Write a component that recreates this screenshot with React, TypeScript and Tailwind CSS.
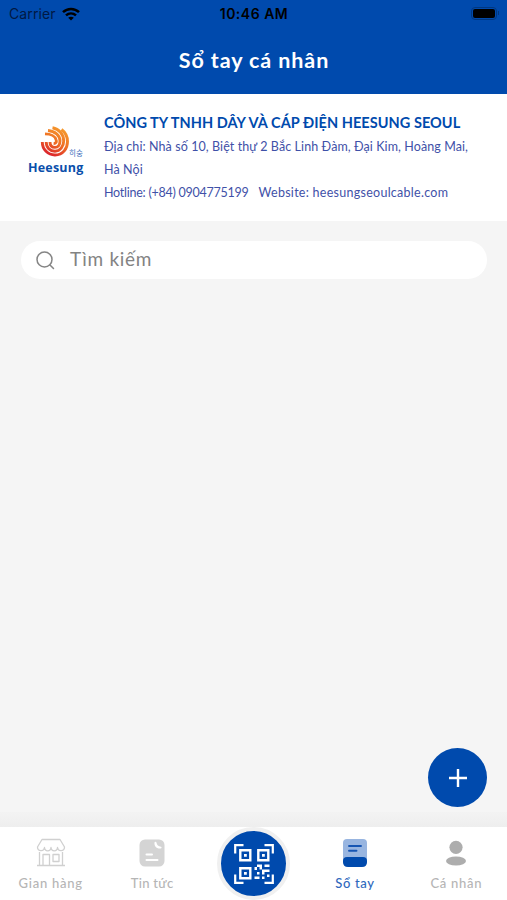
import React from 'react';

function Wifi() {
  return (
    <svg width="18" height="14" viewBox="0 0 18 14" fill="none" stroke="#000" strokeWidth="2.5">
      <path d="M1 5.2C5.5 .8 12.5 .8 17 5.2" />
      <path d="M4 8.4c2.9-2.7 7.1-2.7 10 0" />
      <path d="M9 13.6 6.2 10.8c1.6-1.5 4-1.5 5.6 0z" fill="#000" stroke="none" />
    </svg>
  );
}

function Logo() {
  return (
    <div className="w-[57px]">
      <div className="flex h-[34px] items-end">
        <svg className="ml-3 shrink-0" width="29" height="34" viewBox="12 0 29 34" fill="none" stroke="url(#flame)" strokeWidth="2.900">
          <defs>
            <linearGradient id="flame" gradientUnits="userSpaceOnUse" x1="34" y1="3" x2="20" y2="30">
              <stop offset="0" stopColor="#f59a2c" />
              <stop offset="0.5" stopColor="#ef7025" />
              <stop offset="1" stopColor="#da1f2c" />
            </linearGradient>
          </defs>
          <path d="M14.300 17C14.300 24.500 20 30 27 30C35 30 39.500 23.500 39.500 16.500C39.500 11.500 37.500 7.500 33.500 4.500" />
          <path d="M18.200 17C18.200 22.500 22 26.200 27 26.200C32 26.200 35.700 21.500 35.700 16C35.700 9 31 4 24.500 2.800" />
          <path d="M22 17C22 20.500 24 22.400 27 22.400C30 22.400 32 19.500 32 16C32 10.500 27 6 20 5.500" />
          <path d="M25.600 18.600C28 18.600 28.700 17 28.200 15C27.500 11.500 23 9 17 8.900" />
        </svg>
        <span className="mb-[2px] h-[8px] text-[7.500px] leading-[8px] text-[#3d70bc] font-['Noto_Sans_CJK_KR',sans-serif]">히숭</span>
      </div>
      <div className="mt-px h-[16px] text-[12.500px] leading-[16px] font-bold text-[#0a4fab] font-['Open_Sans',sans-serif] tracking-[0.200px]">Heesung</div>
    </div>
  );
}

function StoreIcon() {
  return (
    <svg width="30" height="30" viewBox="0 0 30 30" fill="none" stroke="#d0d0d0" strokeWidth="1.300" strokeLinejoin="round">
      <path d="M6 1.500H24L28.500 9C28.500 13.500 22 14 21.500 9.500C21 14 15.500 14 15 9.500C14.500 14 9 14 8.500 9.500C8 14 1.500 13.500 1.500 9Z" />
      <path d="M3.500 14V27M26.500 14V27M1 27.500H29M7 27V16.500H13.500V27M17 16.500H23V23.500H17Z" />
    </svg>
  );
}

function NewsIcon() {
  return (
    <svg width="26" height="28" viewBox="0 0 26 28" fill="none">
      <rect x="0.500" y="0.500" width="25" height="27" rx="5.500" fill="#d4d4d4" />
      <path d="M15.500 3.500C15 7 17.500 10 21.500 9.500C22.800 9.300 23 8.300 22 7.800C19.500 7.500 17.800 6 17.500 3.500C17 2.300 15.700 2.500 15.500 3.500Z" fill="#fff" />
      <path d="M7.500 15.500H13M7.500 21H18.500" stroke="#fff" strokeWidth="2" strokeLinecap="round" />
    </svg>
  );
}

function BookIcon() {
  return (
    <svg width="24" height="28" viewBox="0 0 24 28">
      <rect width="24" height="26" rx="4" fill="#98b5e0" />
      <path d="M0 22Q0 18 4 18H20Q24 18 24 22V23Q24 28 19 28H5Q0 28 0 23Z" fill="#004aad" />
      <path d="M6 7H18M6 11.700H13.500" stroke="#1655b3" strokeWidth="1.900" strokeLinecap="round" />
    </svg>
  );
}

function PersonIcon() {
  return (
    <svg width="20" height="26" viewBox="0 0 20 26" fill="#adadad">
      <circle cx="10" cy="7.300" r="6.600" />
      <ellipse cx="10" cy="21" rx="10" ry="4.500" />
    </svg>
  );
}

function QrIcon() {
  return (
    <svg width="40" height="40" viewBox="0 0 40 40" fill="none" stroke="#fff">
      <path d="M1.200 9.500V1.200H9.500M30.500 1.200H38.800V9.500M1.200 30.500V38.800H9.500M30.500 38.800H38.800V30.500" strokeWidth="2.200" />
      <path d="M6.300 6.300H16.300V16.300H6.300ZM24.300 6.300H34.300V16.300H24.300ZM6.300 24.300H16.300V34.300H6.300Z" strokeWidth="2.400" />
      <path d="M10 10h2.800v2.800H10zM28 10h2.800v2.800H28zM10 28h2.800v2.800H10z" fill="#fff" stroke="none" />
      <path d="M23 20.500h5v5h-2.500v-2.500h-2.500v3h-2.500v-3h2.500zM30.500 20.500h5v2.500h-5zM28 25.500h7.500v2.500h-5v2.500H28zM23 28h2.500v2.500H23zM33 30.500h2.500V33H33zM20.500 32.500h5V35h-5zM28 32.500h2.500V35H28z" fill="#fff" stroke="none" />
    </svg>
  );
}

function Tab({ icon, label, color }: { icon: React.ReactNode; label: string; color: string }) {
  return (
    <div className={`flex flex-1 flex-col items-center pt-3 ${color}`}>
      <div className="flex h-7 items-center">{icon}</div>
      <span className="mt-[7px] text-[13px] leading-[18px] font-medium whitespace-nowrap">{label}</span>
    </div>
  );
}

export default function App() {
  return (
    <div className="flex h-[900px] w-[507px] flex-col overflow-hidden bg-[#f5f5f5] font-['Lato','Noto_Sans',sans-serif]">
      <header className="h-[94px] shrink-0 bg-[#004aad]">
        <div className="grid h-7 grid-cols-3 items-center pr-2 pl-[9px] font-['Inter',sans-serif] text-[14px] text-black">
          <div className="flex items-center gap-[6px] pb-px">
            <span className="tracking-[0.1px] text-[#001944]">Carrier</span>
            <Wifi />
          </div>
          <span className="pb-px text-center font-semibold tracking-[0.5px] whitespace-nowrap">10:46 AM</span>
          <div className="flex items-center justify-end gap-px pb-[2px]">
            <div className="h-[13px] w-[26px] rounded-[4px] border border-[#003780] p-px">
              <div className="h-full rounded-[2px] bg-black" />
            </div>
            <div className="h-1 w-px bg-[#003780]" />
          </div>
        </div>
        <h1 className="mt-4 pl-px text-center text-[21.5px] leading-[32px] font-bold tracking-[0.9px] text-white">Sổ tay cá nhân</h1>
      </header>

      <section className="flex h-[127px] shrink-0 bg-white pl-7 text-[#3f51a8]">
        <div className="w-[76px] shrink-0 pt-[31px]">
          <Logo />
        </div>
        <div className="pt-[18px] text-[12.5px] leading-[23px] whitespace-nowrap">
          <h2 className="-mt-px mb-px text-[14.5px] font-bold tracking-[0.05px] text-[#004aad]">CÔNG TY TNHH DÂY VÀ CÁP ĐIỆN HEESUNG SEOUL</h2>
          <p className="tracking-[0.09px]">Địa chỉ: Nhà số 10, Biệt thự 2 Bắc Linh Đàm, Đại Kim, Hoàng Mai,<br />Hà Nội</p>
          <p className="flex gap-[10px]">
            <span className="tracking-[-0.25px]">Hotline: (+84) 0904775199</span>
            <span className="tracking-[0.27px]">Website: heesungseoulcable.com</span>
          </p>
        </div>
      </section>

      <main className="flex flex-1 flex-col items-end px-5 pt-5">
        <div className="flex h-[38px] w-full items-center pl-px">
          <div className="flex h-full w-full items-center gap-[15px] rounded-full bg-white pl-[15px] text-[#838383]">
            <svg width="19" height="19" viewBox="0 0 19 19" fill="none" stroke="#858585" strokeWidth="1.500" strokeLinecap="round">
              <circle cx="8.500" cy="8.500" r="7.500" />
              <path d="m14 14 3.500 3.500" />
            </svg>
            <span className="pb-[2px] text-[19px] tracking-[0.7px]">Tìm kiếm</span>
          </div>
        </div>
        <button className="mt-auto mb-[5px] flex size-[59px] items-center justify-center rounded-full bg-[#004aad]">
          <svg width="18" height="18" viewBox="0 0 18 18" stroke="#fff" strokeWidth="2.400"><path d="M9 0V18M0 9H18" /></svg>
        </button>
        <div className="-mx-5 h-[15px] w-[507px] bg-linear-to-b from-[#f3f3f3] to-[#eeeeee]" />
      </main>

      <nav className="flex h-[73px] shrink-0 bg-white">
        <Tab icon={<StoreIcon />} label="Gian hàng" color="text-[#b5b5b5] tracking-[0.75px]" />
        <Tab icon={<NewsIcon />} label="Tin tức" color="text-[#b5b5b5] tracking-[0.3px]" />
        <div className="flex flex-1 justify-center">
          <div className="flex size-[73px] items-center justify-center rounded-full border-[4px] border-[#f0f0f0] bg-[#004aad]">
            <QrIcon />
          </div>
        </div>
        <Tab icon={<BookIcon />} label="Sổ tay" color="text-[#2f68bd] tracking-[0.65px]" />
        <Tab icon={<PersonIcon />} label="Cá nhân" color="text-[#b5b5b5] tracking-[0.7px]" />
      </nav>
    </div>
  );
}
